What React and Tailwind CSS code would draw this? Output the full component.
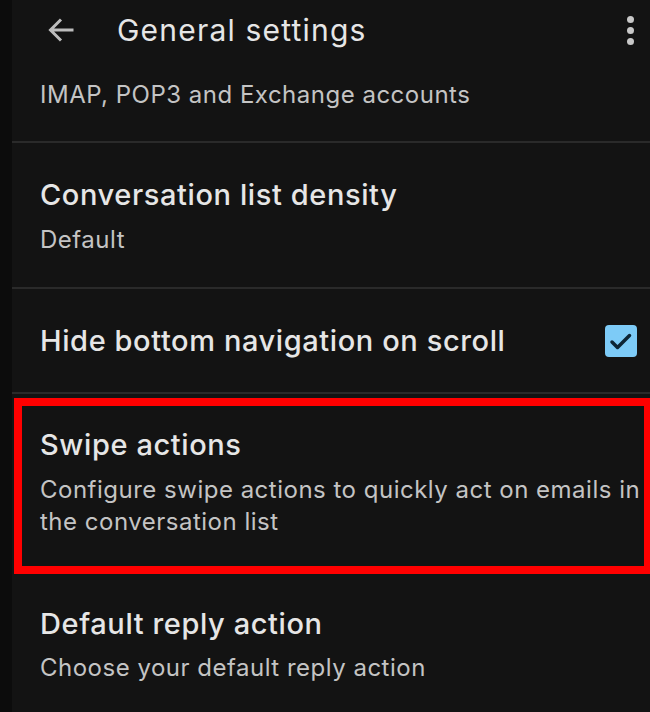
import React from "react";

function Divider() {
  return <div className="h-[2px] bg-[#2a2a2a]" />;
}

export default function App() {
  return (
    <div className="flex w-[650px] h-[712px] overflow-hidden bg-[#131313] font-['Inter',sans-serif]">
      <div className="w-[12px] shrink-0 bg-[#0c0c0c]" />
      <div className="flex-1 flex flex-col">
        {/* Header */}
        <div className="h-[60px] flex items-center relative">
          <svg className="ml-[35px]" width="28" height="28" viewBox="0 0 28 28" fill="none">
            <path d="M26.5 14H3.5M14 3.5L3.5 14L14 24.5" stroke="#bdbdbd" strokeWidth="3" strokeLinecap="butt" strokeLinejoin="miter" />
          </svg>
          <div className="ml-[42px] text-[30px] leading-[36px] text-[#e6e6e6] tracking-[1.2px]">General settings</div>
          <div className="ml-auto mr-[16px] flex flex-col gap-[4px] items-center">
            <span className="w-[7px] h-[7px] rounded-full bg-[#c8c8c8]" />
            <span className="w-[7px] h-[7px] rounded-full bg-[#c8c8c8]" />
            <span className="w-[7px] h-[7px] rounded-full bg-[#c8c8c8]" />
          </div>
        </div>
        {/* Accounts */}
        <div className="h-[81px] pt-[18px] pl-[28px]">
          <div className="text-[24px] leading-[34px] text-[#c4c4c4] tracking-[0.5px]">IMAP, POP3 and Exchange accounts</div>
        </div>
        <Divider />
        {/* Density */}
        <div className="h-[144px] pt-[34px] pl-[28px]">
          <div className="text-[29px] leading-[36px] text-[#e6e6e6] font-medium tracking-[0.6px]">Conversation list density</div>
          <div className="mt-[10px] text-[24px] leading-[34px] text-[#c4c4c4] tracking-[0.5px]">Default</div>
        </div>
        <Divider />
        {/* Hide bottom nav */}
        <div className="h-[103px] flex items-center pl-[28px] pr-[13px]">
          <div className="text-[29px] leading-[36px] text-[#e6e6e6] font-medium tracking-[0.6px] whitespace-nowrap">Hide bottom navigation on scroll</div>
          <div className="ml-auto w-[32px] h-[32px] rounded-[4px] bg-[#7dcbf7] flex items-center justify-center">
            <svg width="32" height="32" viewBox="0 0 32 32" fill="none">
              <polyline points="7,17 12.5,22.5 24.5,10.5" stroke="#0d2535" strokeWidth="3.5" strokeLinecap="round" strokeLinejoin="round" />
            </svg>
          </div>
        </div>
        <Divider />
        {/* Swipe actions (highlighted) */}
        <div className="mt-[4px] ml-[2px] h-[176px] border-[#ff0000] border-t-[8px] border-b-[8px] border-l-[8px] border-r-[6px] pt-[21px] pl-[18px]">
          <div className="text-[29px] leading-[36px] text-[#e6e6e6] font-medium tracking-[0.6px]">Swipe actions</div>
          <div className="mt-[11px] text-[24px] leading-[32px] text-[#c4c4c4] whitespace-nowrap tracking-[0.5px]">
            Configure swipe actions to quickly act on emails in
            <br />
            the conversation list
          </div>
        </div>
        {/* Default reply */}
        <div className="pt-[32px] pl-[28px]">
          <div className="text-[29px] leading-[36px] text-[#e6e6e6] font-medium tracking-[0.6px]">Default reply action</div>
          <div className="mt-[9px] text-[24px] leading-[34px] text-[#c4c4c4] tracking-[0.5px]">Choose your default reply action</div>
        </div>
      </div>
    </div>
  );
}
